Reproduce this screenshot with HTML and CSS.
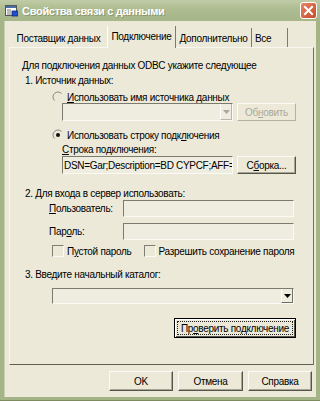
FILE: index.html
```html
<!DOCTYPE html>
<html lang="ru">
<head>
<meta charset="utf-8">
<title>Свойства связи с данными</title>
<link rel="stylesheet" href="styles.css">
</head>
<body>
<div class="window">
  <div class="titlebar">
    <svg class="ticon" width="13" height="12" viewBox="0 0 13 12">
      <rect x="0.5" y="0.5" width="11" height="10" fill="#fff" stroke="#555"/>
      <rect x="1" y="1" width="10" height="2" fill="#4a6ea8"/>
      <path d="M2 5h4M2 7h4M2 9h4" stroke="#777" stroke-width="1"/>
      <rect x="7" y="6" width="6" height="5" fill="#1f4fd0" stroke="#112a77" stroke-width="0.8"/>
    </svg>
    <span class="title">Свойства связи с данными</span>
    <div class="close">
      <svg width="11" height="11" viewBox="0 0 11 11"><path d="M2 2l7 7M9 2l-7 7" stroke="#fff" stroke-width="2" stroke-linecap="square"/></svg>
    </div>
  </div>
  <div class="client">
    <div class="tabs">
      <div class="tab t1">Поставщик данных</div>
      <div class="tab t2 sel">Подключение</div>
      <div class="tab t3">Дополнительно</div>
      <div class="tab t4">Все</div>
    </div>
    <div class="panel">
      <div class="line intro">Для подключения данных ODBC укажите следующее</div>
      <div class="line sec s1">1. Источник данных:</div>
      <div class="row radio r1">
        <svg class="rb" width="12" height="12" viewBox="0 0 12 12"><path d="M2.46 9.54A5 5 0 0 1 9.54 2.46" fill="none" stroke="#8a8a80"/></svg>
        <span><u>И</u>спользовать имя источника данных</span>
      </div>
      <div class="row ctrl c1">
        <div class="combo dis w171"><div class="arrow dis"><svg width="7" height="4" viewBox="0 0 7 4"><path d="M0 0h7L3.5 4z" fill="#aca899"/></svg></div></div>
        <div class="btn dis w59">Об<u>н</u>овить</div>
      </div>
      <div class="row radio r2">
        <svg class="rb" width="12" height="12" viewBox="0 0 12 12"><path d="M2.46 9.54A5 5 0 0 1 9.54 2.46" fill="none" stroke="#8a8a80"/><circle cx="6" cy="6" r="2" fill="#111"/></svg>
        <span>Использовать строку подк<u>л</u>ючения</span>
      </div>
      <div class="line lbl l1"><u>С</u>трока подключения:</div>
      <div class="row ctrl c2">
        <div class="input w171"><span class="val">DSN=Gar;Description=BD CYPCF;AFF=</span></div>
        <div class="btn w59">С<u>б</u>орка...</div>
      </div>
      <div class="line sec s2">2. Для входа в сервер использовать:</div>
      <div class="row field f1">
        <span class="flabel"><u>П</u>ользователь:</span>
        <div class="input w171"></div>
      </div>
      <div class="row field f2">
        <span class="flabel">Пар<u>о</u>ль:</span>
        <div class="input w171"></div>
      </div>
      <div class="row checks">
        <span class="cb"></span><span class="ctext">П<u>у</u>стой пароль</span>
        <span class="cb cb2"></span><span class="ctext">Разрешить сохранение пароля</span>
      </div>
      <div class="line sec s3">3. Введите начальный каталог:</div>
      <div class="row c3">
        <div class="combo w242"><div class="arrow"><svg width="7" height="4" viewBox="0 0 7 4"><path d="M0 0h7L3.5 4z" fill="#000"/></svg></div></div>
      </div>
      <div class="row c4">
        <div class="btn focus w122"><span class="focusin">Пр<u>о</u>верить подключение</span></div>
      </div>
    </div>
    <div class="buttons">
      <div class="btn bw64">OK</div>
      <div class="btn bw65">Отмена</div>
      <div class="btn bw64">Справка</div>
    </div>
  </div>
</div>
</body>
</html>
```
FILE: styles.css
```css
html, body {
  margin: 0;
  padding: 0;
  background: #a7b689;
}
body {
  width: 320px;
  height: 401px;
  overflow: hidden;
  font-family: "Liberation Sans", Arial, sans-serif;
  font-size: 10px;
  letter-spacing: -0.3px;
  color: #000;
  white-space: nowrap;
}
u { text-decoration: underline; }
.window {
  width: 320px;
  height: 401px;
  display: flex;
  flex-direction: column;
  background: #a5b486;
  box-sizing: border-box;
  border-bottom: 1px solid #7d8b5e;
}
.titlebar {
  height: 21px;
  flex: none;
  display: flex;
  align-items: center;
  background: linear-gradient(#c0cca6, #aebd92 40%, #a7b689);
  padding-left: 5px;
}
.ticon { flex: none; margin-top: 1px; }
.title {
  margin-left: 4px;
  color: #fff;
  font-weight: bold;
  font-size: 11px;
  letter-spacing: -0.3px;
  text-shadow: 1px 1px 0 #8b9a6d;
  flex: 1;
}
.close {
  width: 17px;
  height: 17px;
  margin-right: 3px;
  box-sizing: border-box;
  border: 1px solid #fff;
  border-radius: 3px;
  background: linear-gradient(135deg, #e38a6a, #d4603d 60%, #c24f2e);
  display: flex;
  align-items: center;
  justify-content: center;
}
.client {
  flex: 1;
  margin: 0 4px 3px 4px;
  background: #ece9d8;
  border-left: 1px solid #c9d2b3;
  display: flex;
  flex-direction: column;
  padding: 5px 2px 0 4px;
}
.tabs {
  height: 21px;
  display: flex;
  align-items: flex-end;
  padding-left: 1px;
  position: relative;
  z-index: 1;
}
.tab {
  height: 19px;
  box-sizing: border-box;
  display: flex;
  align-items: center;
  justify-content: center;
  padding-top: 1px;
}
.t1 { width: 97px; }
.t2 { width: 69px; }
.t3 { width: 76px; border-right: 1px solid #7b7b70; }
.t4 { width: 36px; border-right: 1px solid #7b7b70; justify-content: flex-start; padding-left: 3px; }
.tab.sel {
  height: 22px;
  margin-bottom: -1px;
  background: #ece9d8;
  border-left: 1px solid #fff;
  border-right: 1px solid #7b7b70;
  padding-top: 0;
  padding-bottom: 2px;
}
.panel {
  width: 305px;
  height: 318px;
  box-sizing: border-box;
  border-top: 1px solid #f7f6f0;
  border-left: 1px solid #f7f6f0;
  border-right: 1px solid #6e6e62;
  border-bottom: 1px solid #5f5f55;
  padding-top: 11px;
}
.line { height: 13px; line-height: 13px; }
.intro { margin-left: 12px; }
.sec { margin-left: 15px; }
.s1 { margin-top: 2px; }
.row { display: flex; align-items: center; }
.radio { height: 12px; margin-left: 42px; }
.r1 { margin-top: 4px; }
.rb { flex: none; margin-right: 3px; }
.ctrl { height: 18px; margin-left: 52px; }
.r2 { margin-top: 8px; }
.l1 { margin-left: 52px; margin-top: 2px; }
.c2 { margin-top: 0; }
.s2 { margin-top: 13px; }
.field { height: 17px; margin-left: 39px; }
.f2 { margin-top: 6px; }
.flabel { width: 74px; flex: none; }
.f1 .input, .f2 .input { height: 17px; }
.checks { height: 14px; margin-left: 42px; margin-top: 4px; }
.cb {
  width: 12px;
  height: 12px;
  box-sizing: border-box;
  border-top: 1px solid #7f7f74;
  border-left: 1px solid #7f7f74;
  border-right: 1px solid #fbfaf5;
  border-bottom: 1px solid #fbfaf5;
  margin-right: 3px;
  flex: none;
}
.cb2 { margin-left: 12px; }
.s3 { margin-top: 10px; }
.c3 { height: 16px; margin-left: 42px; margin-top: 7px; }
.c4 { height: 20px; margin-left: 164px; margin-top: 14px; }

.input, .combo {
  height: 18px;
  box-sizing: border-box;
  border-top: 1px solid #7a7a6e;
  border-left: 1px solid #7a7a6e;
  border-right: 1px solid #fbfaf4;
  border-bottom: 1px solid #fbfaf4;
  background: #efeddf;
  display: flex;
  align-items: center;
  overflow: hidden;
}
.combo { justify-content: flex-end; }
.c3 .combo { height: 16px; }
.w171 { width: 171px; flex: none; }
.w242 { width: 242px; flex: none; }
.w59 { width: 59px; flex: none; }
.w122 { width: 122px; flex: none; }
.val { padding-left: 1px; }
.arrow {
  width: 12px;
  height: 100%;
  box-sizing: border-box;
  border-left: 1px solid #fff;
  border-right: 1px solid #6f6f64;
  border-bottom: 1px solid #6f6f64;
  display: flex;
  align-items: center;
  justify-content: center;
}
.arrow.dis { border-right-color: #b9b6a6; border-bottom-color: #b9b6a6; }
.btn {
  box-sizing: border-box;
  height: 18px;
  margin-left: 4px;
  border-top: 1px solid #fbfaf4;
  border-left: 1px solid #fbfaf4;
  border-right: 1px solid #55554c;
  border-bottom: 1px solid #55554c;
  box-shadow: inset -1px -1px 0 #a8a595;
  display: flex;
  align-items: center;
  justify-content: center;
}
.btn.dis { color: #aca899; border-right-color: #b4b1a1; border-bottom-color: #b4b1a1; box-shadow: none; }
.btn.focus {
  margin-left: 0;
  height: 20px;
  border: 1px solid #000;
  box-shadow: inset 1px 1px 0 #fff, inset -1px -1px 0 #55554c;
  padding: 2px;
}
.focusin {
  flex: 1;
  align-self: stretch;
  border: 1px dotted #222;
  display: flex;
  align-items: center;
  justify-content: center;
}
.buttons {
  display: flex;
  justify-content: flex-end;
  gap: 5px;
  margin-top: 6px;
  margin-right: 2px;
}
.buttons .btn { height: 20px; margin-left: 0; }
.bw64 { width: 64px; }
.bw65 { width: 65px; }
```
